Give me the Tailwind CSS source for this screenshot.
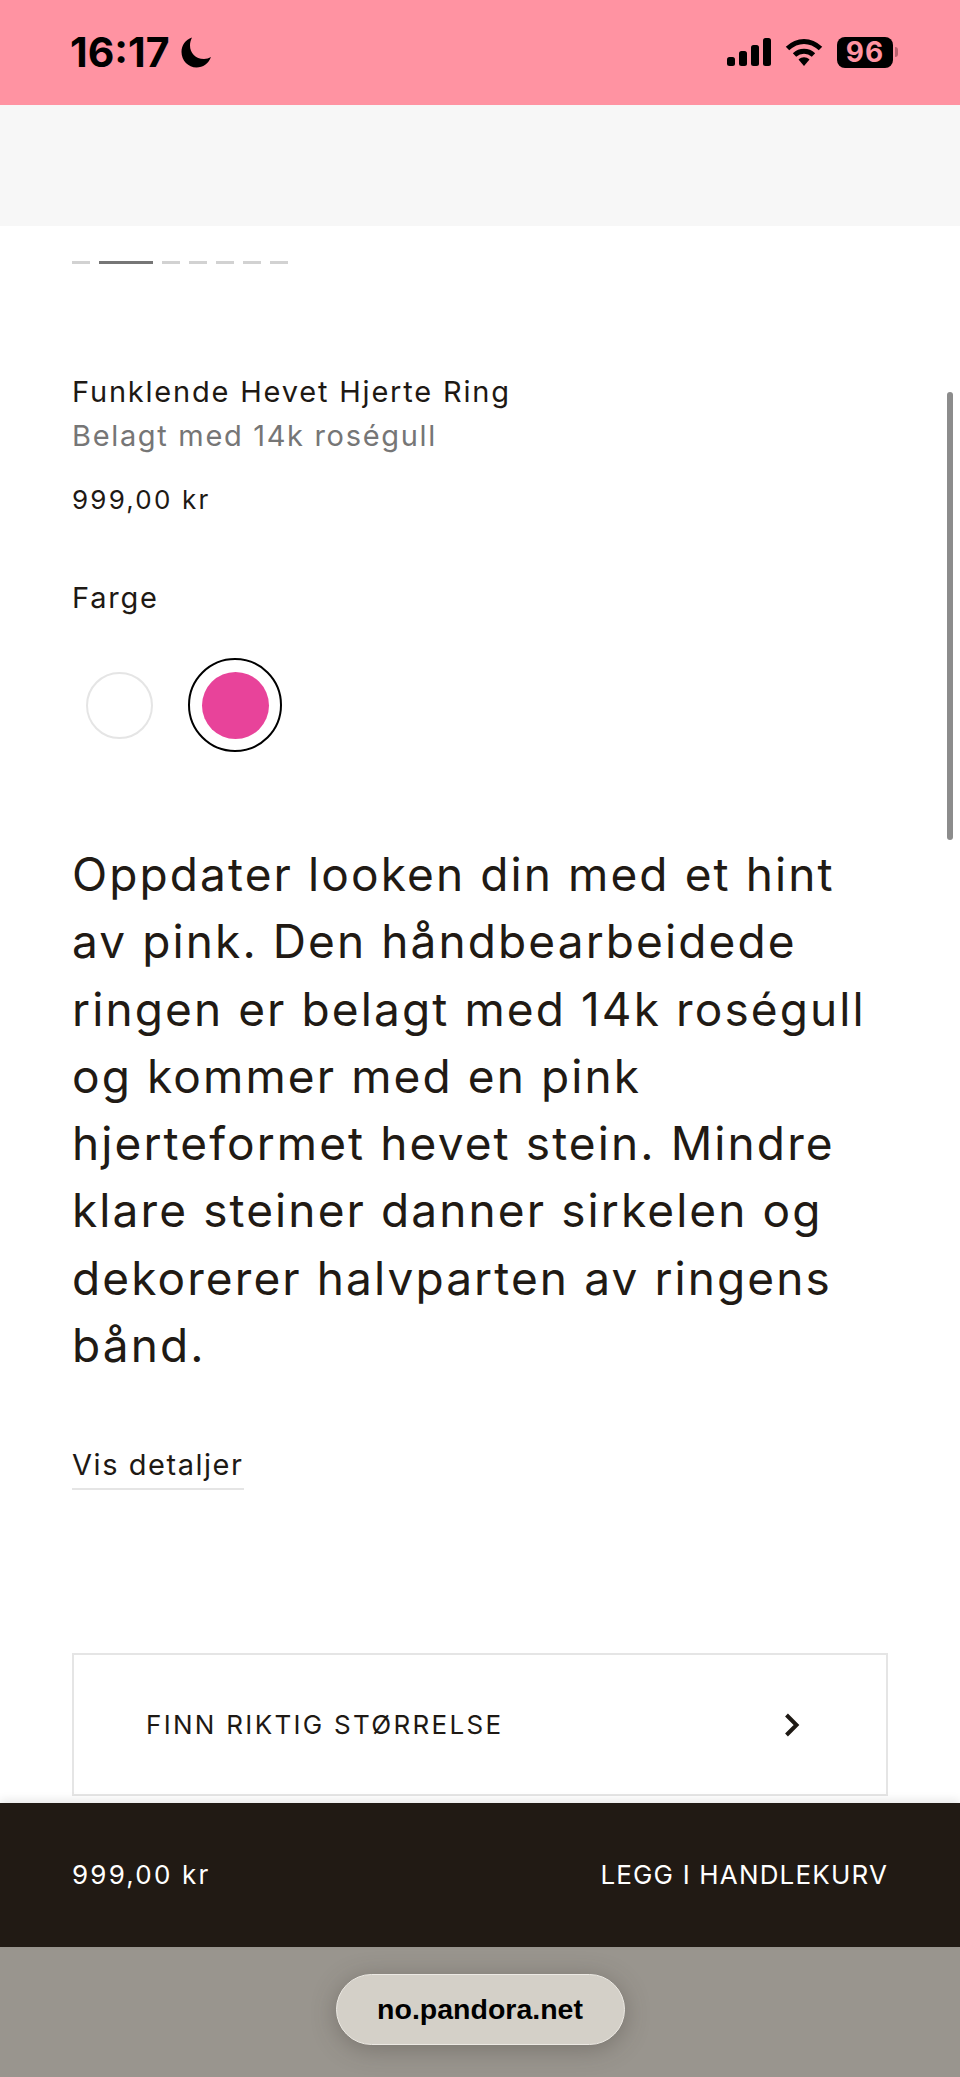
<!doctype html>
<html lang="no">
<head>
<meta charset="utf-8">
<script src="https://cdn.jsdelivr.net/npm/@tailwindcss/browser@4"></script>
<title>Pandora</title>
</head>
<body class="bg-white">
<div class="relative flex h-[2077px] w-[960px] flex-col overflow-hidden bg-white font-['Inter',sans-serif] text-[#1e1914]">
  <header class="flex h-[105px] shrink-0 items-center justify-between bg-[#ff93a2] pl-[70px] pr-[62px] pb-[1px] text-black">
    <div class="flex items-center gap-[11px]">
      <span class="text-[41px] leading-none font-bold">16:17</span>
      <svg class="h-[31px] w-[31px]" viewBox="0 0 31 31"><path fill="#000" d="M11 .5C4.500 2.500.5 8.300.5 15c0 8.500 6.800 15.500 15 15.500 6.500 0 12-3.800 14.500-10.500-2 1.300-4.500 2-7 2C14.500 22 9 16 9 8.500 9 5.800 9.700 3 11 .5Z"/></svg>
    </div>
    <div class="flex items-center gap-[14px]">
      <svg class="h-[28px] w-[44px]" viewBox="0 0 44 28"><rect x="0" y="19" width="8" height="9" rx="2.500"/><rect x="12" y="13" width="8" height="15" rx="2.500"/><rect x="24" y="7" width="8" height="21" rx="2.500"/><rect x="36" y="0" width="8" height="28" rx="2.500"/></svg>
      <svg class="h-[28px] w-[38px]" viewBox="0 0 38 28"><path fill="none" stroke="#000" stroke-width="5" d="M2.500 10.500C12.500 1 25.500 1 35.500 10.500M9.500 17C15 12 23 12 28.500 17"/><path d="M13.500 21.500C17 18.500 21 18.500 24.500 21.500L19 28Z"/></svg>
      <div class="flex items-center">
        <div class="flex h-[31px] w-[56px] items-center justify-center rounded-[8px] bg-black text-[28px] font-bold leading-none tracking-[1px] text-[#ff93a2]">96</div>
        <div class="ml-[2px] h-[10px] w-[3px] rounded-r-full bg-[#b9626f]"></div>
      </div>
    </div>
  </header>

  <div class="h-[121px] shrink-0 bg-[#f7f7f7]"></div>

  <main class="min-h-0 flex-1 overflow-hidden px-[72px] pt-[35px]">
    <div class="flex items-center gap-[9px]">
      <span class="h-[3px] w-[18px] bg-[#d2d2d2]"></span>
      <span class="h-[3px] w-[54px] bg-[#767676]"></span>
      <span class="h-[3px] w-[18px] bg-[#d2d2d2]"></span>
      <span class="h-[3px] w-[18px] bg-[#d2d2d2]"></span>
      <span class="h-[3px] w-[18px] bg-[#d2d2d2]"></span>
      <span class="h-[3px] w-[18px] bg-[#d2d2d2]"></span>
      <span class="h-[3px] w-[18px] bg-[#d2d2d2]"></span>
    </div>

    <h1 class="mt-[106px] text-[29px] leading-[44px] font-normal tracking-[1.8px] text-[#1e1914]">Funklende Hevet Hjerte Ring</h1>
    <p class="text-[29px] leading-[44px] tracking-[1.67px] text-[#767676]">Belagt med 14k roségull</p>
    <p class="mt-[20px] text-[26px] leading-[44px] tracking-[2.2px]">999,00 kr</p>

    <p class="mt-[54px] text-[29px] leading-[44px] tracking-[1.8px]">Farge</p>
    <div class="mt-[38px] flex items-center gap-[22px]">
      <div class="flex h-[94px] w-[94px] items-center justify-center">
        <div class="h-[67px] w-[67px] rounded-full border-2 border-[#e5e5e5] bg-white"></div>
      </div>
      <div class="flex h-[94px] w-[94px] items-center justify-center rounded-full border-2 border-black">
        <div class="h-[67px] w-[67px] rounded-full bg-[#e8439a]"></div>
      </div>
    </div>

    <p class="mt-[89px] w-[816px] text-[46px] leading-[67.3px] tracking-[2.1px] text-[#211a14]">Oppdater looken din med et hint av pink. Den håndbearbeidede ringen er belagt med 14k roségull og kommer med en pink hjerteformet hevet stein. Mindre klare steiner danner sirkelen og dekorerer halvparten av ringens bånd.</p>

    <a class="mt-[64px] inline-block border-b-2 border-[#e5e5e5] pb-[1px] text-[29px] leading-[44px] tracking-[1.55px]">Vis detaljer</a>

    <div class="mt-[163px] flex h-[143px] w-[816px] items-center justify-between border-2 border-[#e5e5e5] pl-[72px] pr-[86px]">
      <span class="text-[26px] leading-none tracking-[2.3px]">FINN RIKTIG STØRRELSE</span>
      <svg class="h-[24px] w-[16px]" viewBox="0 0 16 24"><path fill="none" stroke="#1e1914" stroke-width="4" d="M2.500 2 12.500 12 2.500 22"/></svg>
    </div>
  </main>

  <div class="relative z-10 flex h-[144px] shrink-0 items-center justify-between bg-[#211a14] px-[72px] text-white shadow-[0_-4px_8px_rgba(0,0,0,0.08)]">
    <span class="text-[26px] leading-none tracking-[2.2px]">999,00 kr</span>
    <span class="text-[26px] leading-none tracking-[1.17px]">LEGG I HANDLEKURV</span>
  </div>

  <footer class="flex h-[130px] shrink-0 items-start justify-center bg-[#99958e] pt-[27px]">
    <div class="flex h-[71px] w-[289px] items-center justify-center rounded-[36px] border border-[#ece9e3] bg-[#d4d0c8] text-[28.5px] font-bold leading-none text-black shadow-[0_4px_24px_rgba(60,55,50,0.35)] font-['Liberation_Sans',sans-serif]">no.pandora.net</div>
  </footer>

  <div class="absolute right-[7px] top-[392px] h-[448px] w-[6px] rounded-full bg-[#8c8c8c]"></div>
</div>
</body>
</html>
